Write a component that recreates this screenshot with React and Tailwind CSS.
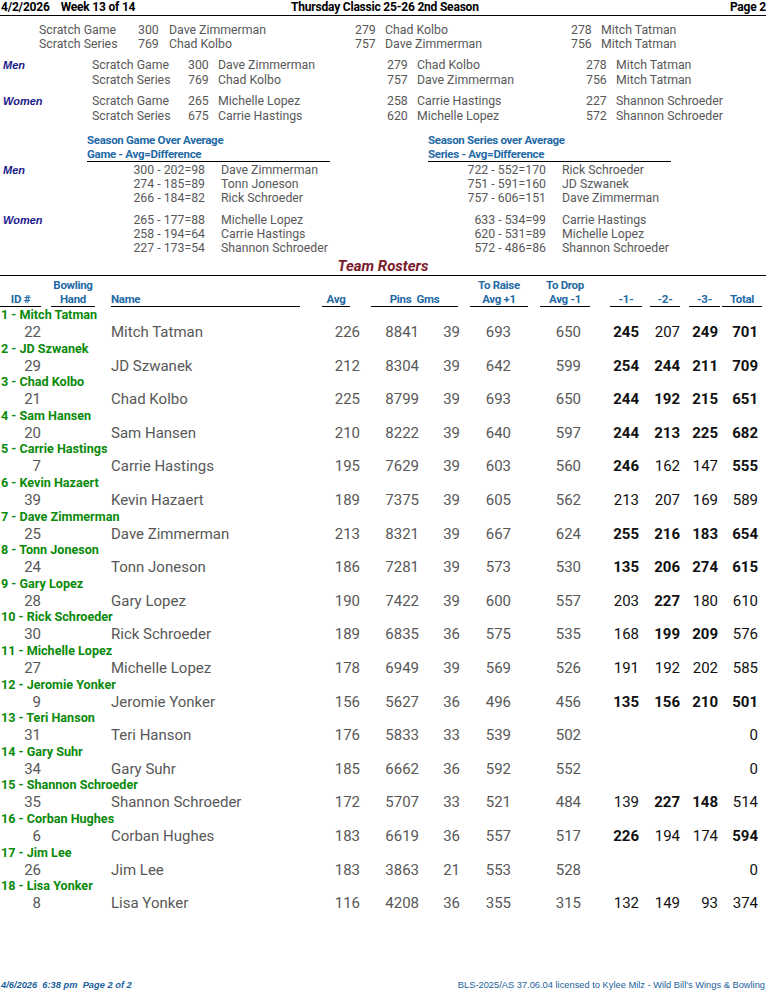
import React from 'react';

const teams = [
  ['Mitch Tatman', 22, 226, 8841, 39, 693, 650, [[245, 1], [207, 0], [249, 1]], [701, 1]],
  ['JD Szwanek', 29, 212, 8304, 39, 642, 599, [[254, 1], [244, 1], [211, 1]], [709, 1]],
  ['Chad Kolbo', 21, 225, 8799, 39, 693, 650, [[244, 1], [192, 1], [215, 1]], [651, 1]],
  ['Sam Hansen', 20, 210, 8222, 39, 640, 597, [[244, 1], [213, 1], [225, 1]], [682, 1]],
  ['Carrie Hastings', 7, 195, 7629, 39, 603, 560, [[246, 1], [162, 0], [147, 0]], [555, 1]],
  ['Kevin Hazaert', 39, 189, 7375, 39, 605, 562, [[213, 0], [207, 0], [169, 0]], [589, 0]],
  ['Dave Zimmerman', 25, 213, 8321, 39, 667, 624, [[255, 1], [216, 1], [183, 1]], [654, 1]],
  ['Tonn Joneson', 24, 186, 7281, 39, 573, 530, [[135, 1], [206, 1], [274, 1]], [615, 1]],
  ['Gary Lopez', 28, 190, 7422, 39, 600, 557, [[203, 0], [227, 1], [180, 0]], [610, 0]],
  ['Rick Schroeder', 30, 189, 6835, 36, 575, 535, [[168, 0], [199, 1], [209, 1]], [576, 0]],
  ['Michelle Lopez', 27, 178, 6949, 39, 569, 526, [[191, 0], [192, 0], [202, 0]], [585, 0]],
  ['Jeromie Yonker', 9, 156, 5627, 36, 496, 456, [[135, 1], [156, 1], [210, 1]], [501, 1]],
  ['Teri Hanson', 31, 176, 5833, 33, 539, 502, [], [0, 0]],
  ['Gary Suhr', 34, 185, 6662, 36, 592, 552, [], [0, 0]],
  ['Shannon Schroeder', 35, 172, 5707, 33, 521, 484, [[139, 0], [227, 1], [148, 1]], [514, 0]],
  ['Corban Hughes', 6, 183, 6619, 36, 557, 517, [[226, 1], [194, 0], [174, 0]], [594, 1]],
  ['Jim Lee', 26, 183, 3863, 21, 553, 528, [], [0, 0]],
  ['Lisa Yonker', 8, 116, 4208, 36, 355, 315, [[132, 0], [149, 0], [93, 0]], [374, 0]],
];

const gray = 'text-[#585858]';
const blue = 'text-[#1f6aa6]';

function TopRow({ label, vals }) {
  return (
    <div className={`flex leading-[14px] text-[12.3px] ${gray}`}>
      <div className="w-[39px]" />
      <div className="w-[99px]">{label}</div>
      <div className="w-[31px]">{vals[0]}</div>
      <div className="w-[186px]">{vals[1]}</div>
      <div className="w-[30px]">{vals[2]}</div>
      <div className="w-[186px]">{vals[3]}</div>
      <div className="w-[30px]">{vals[4]}</div>
      <div>{vals[5]}</div>
    </div>
  );
}

function SexRow({ sex, label, vals }) {
  return (
    <div className={`flex leading-[14.5px] text-[12.3px] ${gray}`}>
      <div className="w-[92px] pl-[3px] font-['Liberation_Sans',sans-serif] text-[11px] font-bold italic text-[#1a1a8c]">{sex}</div>
      <div className="w-[96px]">{label}</div>
      <div className="w-[30px]">{vals[0]}</div>
      <div className="w-[169px]">{vals[1]}</div>
      <div className="w-[30px]">{vals[2]}</div>
      <div className="w-[169px]">{vals[3]}</div>
      <div className="w-[30px]">{vals[4]}</div>
      <div>{vals[5]}</div>
    </div>
  );
}

function OverRow({ sex, a, an, b, bn }) {
  return (
    <div className={`flex leading-[14px] text-[12.3px] ${gray}`}>
      <div className="w-[87px] pl-[3px] font-['Liberation_Sans',sans-serif] text-[11px] font-bold italic text-[#1a1a8c]">{sex}</div>
      <div className="w-[118px] text-right">{a}</div>
      <div className="w-[16px]" />
      <div className="w-[207px]">{an}</div>
      <div className="w-[118px] text-right">{b}</div>
      <div className="w-[16px]" />
      <div>{bn}</div>
    </div>
  );
}

function HeadCol({ left, width, top, bottom, align = 'text-center' }) {
  return (
    <div style={{ marginLeft: left }} className={`${width} ${align} border-b border-black`}>
      <div className="h-[14px]">{top}</div>
      <div className="h-[14px]">{bottom}</div>
    </div>
  );
}

export default function App() {
  return (
    <div className="w-[768px] h-[991px] flex flex-col bg-white font-['Roboto',sans-serif]">
      <div className="flex items-end h-[16px] mr-[2px] border-b border-black text-[12px] font-bold tracking-[-0.2px] text-black leading-[15px]">
        <div className="w-[291px] pl-[1px]">
          4/2/2026<span className="ml-[11px]">Week 13 of 14</span>
        </div>
        <div className="flex-1">Thursday Classic 25-26 2nd Season</div>
        <div>Page 2</div>
      </div>

      <div className="mt-[7px]">
        <TopRow label="Scratch Game" vals={[300, 'Dave Zimmerman', 279, 'Chad Kolbo', 278, 'Mitch Tatman']} />
        <TopRow label="Scratch Series" vals={[769, 'Chad Kolbo', 757, 'Dave Zimmerman', 756, 'Mitch Tatman']} />
      </div>
      <div className="mt-[7px]">
        <SexRow sex="Men" label="Scratch Game" vals={[300, 'Dave Zimmerman', 279, 'Chad Kolbo', 278, 'Mitch Tatman']} />
        <SexRow label="Scratch Series" vals={[769, 'Chad Kolbo', 757, 'Dave Zimmerman', 756, 'Mitch Tatman']} />
      </div>
      <div className="mt-[7px]">
        <SexRow sex="Women" label="Scratch Game" vals={[265, 'Michelle Lopez', 258, 'Carrie Hastings', 227, 'Shannon Schroeder']} />
        <SexRow label="Scratch Series" vals={[675, 'Carrie Hastings', 620, 'Michelle Lopez', 572, 'Shannon Schroeder']} />
      </div>

      <div className={`mt-[10px] flex text-[11.5px] font-bold tracking-[-0.3px] leading-[14px] ${blue}`}>
        <div className="ml-[87px] w-[243px] border-b border-black">
          <div>Season Game Over Average</div>
          <div>Game - Avg=Difference</div>
        </div>
        <div className="ml-[98px] w-[243px] border-b border-black">
          <div>Season Series over Average</div>
          <div>Series - Avg=Difference</div>
        </div>
      </div>
      <div className="mt-[1px]">
        <OverRow sex="Men" a="300 - 202=98" an="Dave Zimmerman" b="722 - 552=170" bn="Rick Schroeder" />
        <OverRow a="274 - 185=89" an="Tonn Joneson" b="751 - 591=160" bn="JD Szwanek" />
        <OverRow a="266 - 184=82" an="Rick Schroeder" b="757 - 606=151" bn="Dave Zimmerman" />
      </div>
      <div className="mt-[8px]">
        <OverRow sex="Women" a="265 - 177=88" an="Michelle Lopez" b="633 - 534=99" bn="Carrie Hastings" />
        <OverRow a="258 - 194=64" an="Carrie Hastings" b="620 - 531=89" bn="Michelle Lopez" />
        <OverRow a="227 - 173=54" an="Shannon Schroeder" b="572 - 486=86" bn="Shannon Schroeder" />
      </div>

      <div className="mt-[2px] mr-[2px] h-[19px] border-b border-black text-center text-[15px] leading-[18px] font-bold italic text-[#7a1c2c]">
        Team Rosters
      </div>

      <div className={`flex pt-[2px] text-[11.5px] font-bold tracking-[-0.3px] leading-[14px] ${blue}`}>
        <HeadCol left="0px" width="w-[41px]" bottom="ID #" />
        <HeadCol left="10px" width="w-[44px]" top="Bowling" bottom="Hand" />
        <HeadCol left="16px" width="w-[189px]" bottom="Name" align="text-left" />
        <HeadCol left="22px" width="w-[28px]" bottom="Avg" />
        <HeadCol left="21px" width="w-[87px]" bottom={<span>Pins&nbsp; Gms</span>} />
        <HeadCol left="12px" width="w-[58px]" top="To Raise" bottom="Avg +1" />
        <HeadCol left="12px" width="w-[50px]" top="To Drop" bottom="Avg -1" />
        <HeadCol left="20px" width="w-[32px]" bottom="-1-" />
        <HeadCol left="8px" width="w-[30px]" bottom="-2-" />
        <HeadCol left="9px" width="w-[31px]" bottom="-3-" />
        <HeadCol left="2px" width="w-[40px]" bottom="Total" />
      </div>

      <div className="mt-[1px]">
        {teams.map((t, i) => (
          <div key={i}>
            <div className="h-[15px] pl-[1px] text-[12.6px] leading-[14px] font-bold text-[#0a8a0a]">
              {i + 1} - {t[0]}
            </div>
            <div className="grid grid-cols-[41px_70px_209px_40px_59px_41px_51px_70px_58px_41px_38px_40px] h-[18.6px] items-center text-[15px] leading-[19px]">
              <div className={`text-right ${gray}`}>{t[1]}</div>
              <div />
              <div className={gray}>{t[0]}</div>
              <div className={`text-right ${gray}`}>{t[2]}</div>
              <div className={`text-right ${gray}`}>{t[3]}</div>
              <div className={`text-right ${gray}`}>{t[4]}</div>
              <div className={`text-right ${gray}`}>{t[5]}</div>
              <div className={`text-right ${gray}`}>{t[6]}</div>
              {[0, 1, 2].map(g => (
                <div key={g} className={`text-right text-[#111] ${t[7][g] && t[7][g][1] ? 'font-bold' : ''}`}>
                  {t[7][g] ? t[7][g][0] : ''}
                </div>
              ))}
              <div className={`text-right text-[#111] ${t[8][1] ? 'font-bold' : ''}`}>{t[8][0]}</div>
            </div>
          </div>
        ))}
      </div>

      <div className="mt-auto mb-[1px] flex items-end justify-between pr-[3px] font-['Liberation_Sans',sans-serif] text-[9.3px] leading-[10px] text-[#1a5f9e]">
        <div className="pl-[1px] font-bold italic">4/6/2026&nbsp; 6:38 pm&nbsp; Page 2 of 2</div>
        <div>BLS-2025/AS 37.06.04 licensed to Kylee Milz - Wild Bill's Wings &amp; Bowling</div>
      </div>
    </div>
  );
}
